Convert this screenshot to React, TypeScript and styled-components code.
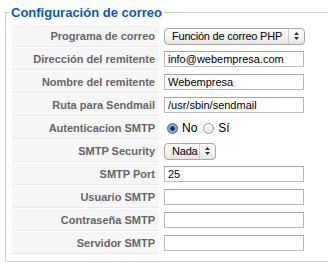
import React from "react";
import styled, { createGlobalStyle } from "styled-components";

const GlobalStyle = createGlobalStyle`
  body {
    margin: 0;
    background: #ffffff;
    font-family: "Liberation Sans", Arial, sans-serif;
  }
`;

const Fieldset = styled.fieldset`
  margin: 5px 0 0 5px;
  width: 323px;
  padding: 5px 6px 7px 6px;
  border: 1px solid #cccccc;
  border-right: none;
  box-sizing: border-box;
`;

const Legend = styled.legend`
  color: #0b55c4;
  font-size: 13px;
  font-weight: bold;
  padding: 0 2px;
  margin-left: -3px;
`;

const Table = styled.div`
  display: grid;
  grid-template-columns: 147px 1fr;
  grid-auto-rows: 22px;
  row-gap: 1px;
  column-gap: 5px;
`;

const Key = styled.div`
  background: #f6f6f6;
  border-bottom: 1px solid #e9e9e9;
  color: #666666;
  font-size: 11px;
  font-weight: bold;
  padding-right: 4px;
  display: flex;
  align-items: center;
  justify-content: flex-end;
  box-sizing: border-box;
`;

const Value = styled.div`
  display: flex;
  align-items: center;
`;

const TextInput = styled.div`
  width: 140px;
  height: 16px;
  border: 1px solid #bcbcbc;
  border-top-color: #a4a4a4;
  box-sizing: border-box;
  font-size: 11px;
  color: #000;
  padding-left: 3px;
  line-height: 14px;
  background: #fff;
`;

const Select = styled.div<{ $width: number }>`
  width: ${(p) => p.$width}px;
  height: 17px;
  border: 1px solid #a8a8a8;
  border-radius: 4px;
  box-sizing: border-box;
  background: linear-gradient(#ffffff, #f2f2f2 55%, #e4e4e4);
  display: flex;
  align-items: center;
  font-size: 11px;
  color: #000;
  overflow: hidden;
`;

const SelectText = styled.span`
  flex: 1;
  min-width: 0;
  padding-left: 7px;
  white-space: nowrap;
  letter-spacing: -0.2px;
`;

const SelectArrows = styled.span`
  flex-shrink: 0;
  width: 15px;
  height: 100%;
  border-left: 1px solid #cccccc;
  display: flex;
  align-items: center;
  justify-content: center;
`;

const RadioGroup = styled.div`
  display: flex;
  align-items: center;
  font-size: 12px;
  color: #000;
  gap: 4px;
  padding-left: 3px;
`;

const Radio = styled.span<{ $checked?: boolean }>`
  width: 11px;
  height: 11px;
  border-radius: 50%;
  box-sizing: border-box;
  border: 1px solid ${(p) => (p.$checked ? "#3d6fb4" : "#9a9a9a")};
  background: ${(p) =>
    p.$checked
      ? "radial-gradient(circle, #1b2f4d 0 2px, #8ab3e6 2.5px, #5b92d8 100%)"
      : "linear-gradient(#fdfdfd, #e6e6e6)"};
`;

const RadioLabel = styled.span`
  margin-right: 2px;
`;

const Arrows = () => (
  <svg width="5" height="8" viewBox="0 0 5 8">
    <path d="M2.5 0 L5 3 L0 3 Z M2.5 8 L5 5 L0 5 Z" fill="#333" />
  </svg>
);

const rows: { label: string; kind: string; value?: string }[] = [
  { label: "Programa de correo", kind: "select", value: "Función de correo PHP" },
  { label: "Dirección del remitente", kind: "text", value: "info@webempresa.com" },
  { label: "Nombre del remitente", kind: "text", value: "Webempresa" },
  { label: "Ruta para Sendmail", kind: "text", value: "/usr/sbin/sendmail" },
  { label: "Autenticacion SMTP", kind: "radio" },
  { label: "SMTP Security", kind: "select-small", value: "Nada" },
  { label: "SMTP Port", kind: "text", value: "25" },
  { label: "Usuario SMTP", kind: "text", value: "" },
  { label: "Contraseña SMTP", kind: "text", value: "" },
  { label: "Servidor SMTP", kind: "text", value: "" },
];

const renderValue = (kind: string, value?: string) => {
  if (kind === "select" || kind === "select-small") {
    return (
      <Select $width={kind === "select" ? 141 : 52}>
        <SelectText>{value}</SelectText>
        <SelectArrows>
          <Arrows />
        </SelectArrows>
      </Select>
    );
  }
  if (kind === "radio") {
    return (
      <RadioGroup>
        <Radio $checked />
        <RadioLabel>No</RadioLabel>
        <Radio />
        <RadioLabel>Sí</RadioLabel>
      </RadioGroup>
    );
  }
  return <TextInput>{value}</TextInput>;
};

export default function App() {
  return (
    <>
      <GlobalStyle />
      <Fieldset>
        <Legend>Configuración de correo</Legend>
        <Table>
          {rows.map((r) => (
            <React.Fragment key={r.label}>
              <Key>{r.label}</Key>
              <Value>{renderValue(r.kind, r.value)}</Value>
            </React.Fragment>
          ))}
        </Table>
      </Fieldset>
    </>
  );
}
